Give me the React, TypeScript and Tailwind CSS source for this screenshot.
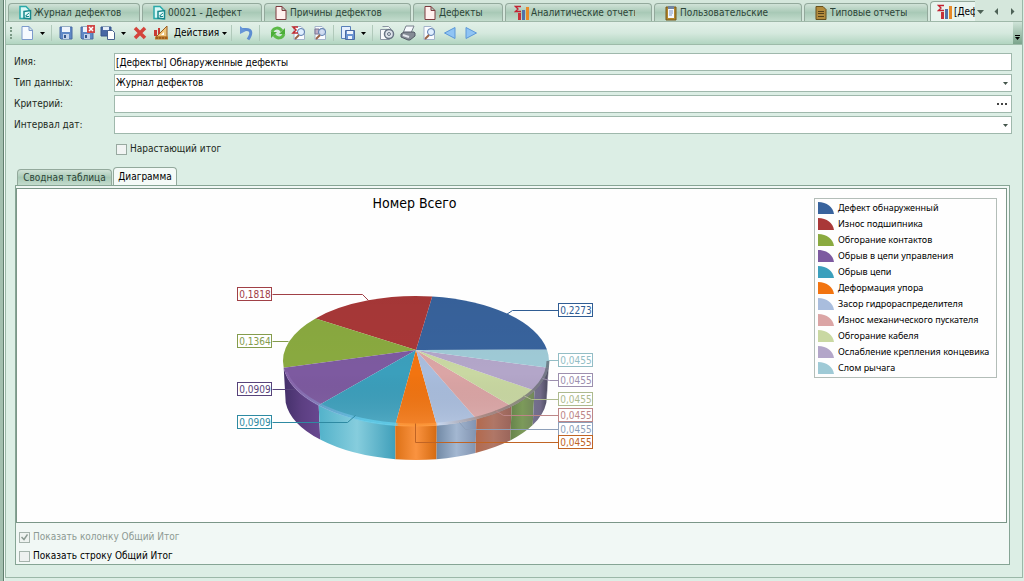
import React, { useState } from 'react';

interface Slice {
  name: string;
  from: number;
  to: number;
  color: string;
  wall?: string;
}

const slices: Slice[] = [
  { name: 'Дефект обнаруженный', from: -10, to: -83, color: '#38639d' },
  { name: 'Износ подшипника', from: -83, to: -139, color: '#a93838' },
  { name: 'Обгорание контактов', from: -139, to: -186, color: '#8aaa40' },
  { name: 'Обрыв в цепи управления', from: -186, to: -223, color: '#7d5aa0', wall: 'purple' },
  { name: 'Обрыв цепи', from: -223, to: -261, color: '#3b9fbc', wall: 'teal' },
  { name: 'Деформация упора', from: -261, to: -279, color: '#f27410', wall: 'orange' },
  { name: 'Засор гидрораспределителя', from: -279, to: -297, color: '#a9bddd', wall: 'blue' },
  { name: 'Износ механического пускателя', from: -297, to: -316, color: '#dba5a5', wall: 'pink' },
  { name: 'Обгорание кабеля', from: -316, to: -333, color: '#c9d8a2', wall: 'green' },
  { name: 'Ослабление крепления концевика', from: -333, to: -354, color: '#b3a6c9', wall: 'lilac' },
  { name: 'Слом рычага', from: -354, to: -370, color: '#9fcad6', wall: 'lilac' },
];

const walls = [
  { id: 'purple', stops: ['#44306a', '#5c3f82', '#684890'] },
  { id: 'teal', stops: ['#52b2ca', '#86cddd', '#3f9fba'] },
  { id: 'orange', stops: ['#dd7116', '#fa9340', '#d56a10'] },
  { id: 'blue', stops: ['#7189a5', '#a3b7d1', '#8193b0'] },
  { id: 'pink', stops: ['#b3694c', '#b07767', '#99645a'] },
  { id: 'green', stops: ['#66844b', '#7c9a5a', '#72875a'] },
  { id: 'lilac', stops: ['#74718f', '#716a88', '#4b4a5e'] },
];

const callouts = [
  { text: '0,2273', x: 321, y: 27, color: '#2f5c93', line: '269,38 275,34 321,34' },
  { text: '0,1818', x: 0, y: 11, color: '#a04046', line: '35,18 125,18 131,24' },
  { text: '0,1364', x: 0, y: 58, color: '#849c4c', line: '35,65 51,65' },
  { text: '0,0909', x: 0, y: 106, color: '#57437a', line: '35,113 58,113' },
  { text: '0,0909', x: 0, y: 139, color: '#2e8aa2', line: '35,146 110,146 118,139' },
  { text: '0,0455', x: 321, y: 77, color: '#93bdc5', line: '310,84 321,84' },
  { text: '0,0455', x: 321, y: 97, color: '#9c8fae', line: '305,102 312,104 321,104' },
  { text: '0,0455', x: 321, y: 116, color: '#adba8e', line: '286,119 294,123 321,123' },
  { text: '0,0455', x: 321, y: 132, color: '#bd8687', line: '258,134 266,139 321,139' },
  { text: '0,0455', x: 321, y: 146, color: '#8d9fb9', line: '222,146 228,153 321,153' },
  { text: '0,0455', x: 321, y: 159, color: '#c06424', line: '178,147 178,166 321,166' },
];

const point = (deg: number, cy: number, rx: number, ry: number) => {
  const a = (deg * Math.PI) / 180;
  return `${(179 + rx * Math.cos(a)).toFixed(1)} ${(cy + ry * Math.sin(a)).toFixed(1)}`;
};

const topPath = (s: Slice) =>
  `M179 74L${point(s.from, 85, 133, 65)}A133 65 0 0 0 ${point(s.to, 85, 133, 65)}Z`;

const wallPath = (s: Slice) => {
  const from = Math.min(s.from, -180);
  const to = Math.max(s.to, -360);
  return `M${point(from, 85, 133, 65)}A133 65 0 0 0 ${point(to, 85, 133, 65)}L${point(to, 120, 131, 64)}A131 64 0 0 1 ${point(from, 120, 131, 64)}Z`;
};

const PieChart = () => (
  <svg width="356" height="190" viewBox="0 0 356 190" className="shrink-0" role="img" aria-label="Номер Всего">
    <defs>
      {walls.map((w) => (
        <linearGradient key={w.id} id={w.id}>
          {w.stops.map((c, i) => (
            <stop key={c} offset={i / 2} stopColor={c} />
          ))}
        </linearGradient>
      ))}
      <linearGradient id="shade" x1="0" y1="0" x2="0" y2="1">
        <stop offset="0" stopColor="#000" stopOpacity="0.03" />
        <stop offset="0.6" stopColor="#000" stopOpacity="0" />
        <stop offset="1" stopColor="#fff" stopOpacity="0.12" />
      </linearGradient>
      <linearGradient id="rim">
        <stop offset="0" stopColor="#a884cc" stopOpacity="0.3" />
        <stop offset="0.3" stopColor="#63d0ee" />
        <stop offset="0.42" stopColor="#63d0ee" />
        <stop offset="0.43" stopColor="#ff9a3c" />
        <stop offset="0.57" stopColor="#ff9a3c" />
        <stop offset="0.58" stopColor="#cbdcf4" />
        <stop offset="0.75" stopColor="#9a8078" />
        <stop offset="1" stopColor="#5c6670" />
      </linearGradient>
    </defs>
    {slices.filter((s) => s.wall).map((s) => (
      <path key={s.name} d={wallPath(s)} fill={`url(#${s.wall})`} />
    ))}
    {slices.map((s) => (
      <path key={s.name} d={topPath(s)} fill={s.color} />
    ))}
    <ellipse cx="179" cy="85" rx="133" ry="65" fill="url(#shade)" />
    <path d={`M${point(170, 85, 132, 64)}A132 64 0 0 0 ${point(0, 85, 132, 64)}`} fill="none" stroke="url(#rim)" strokeWidth="3" strokeOpacity="0.75" />
    {callouts.map((c) => (
      <g key={`${c.x}-${c.y}`} fontFamily="'DejaVu Sans Condensed', 'DejaVu Sans', sans-serif" fontSize="10">
        <polyline points={c.line} transform="translate(0.5 0.5)" fill="none" stroke={c.color} />
        <rect x={c.x + 0.5} y={c.y + 0.5} width="34" height="13" fill="#fff" stroke={c.color} />
        <text x={c.x + 18} y={c.y + 11} textAnchor="middle" fill={c.color}>{c.text}</text>
      </g>
    ))}
  </svg>
);

const Icon = ({ name }: { name: string }) => {
  const floppy = (
    <>
      <path d="M2 2h12v12H3l-1-1z" fill="#5f88c6" stroke="#4a6aa2" />
      <path d="M4 2h8v5H4z" fill="#eef4fc" />
      <path d="M5 9h6v5H5z" fill="#c3d3ea" />
      <path d="M6 10h2v3H6z" fill="#36558c" />
    </>
  );
  const page = <path d="M3 1.5h7l3.500 3.500v9.500H3z" fill="#fafcff" stroke="#a3b2ca" />;
  const lens = (
    <>
      <circle cx="10" cy="7" r="3.500" fill="#d8eaff" fillOpacity="0.8" stroke="#5a7cae" />
      <path d="M8 10l-4 4" stroke="#9a6448" strokeWidth="2" />
    </>
  );
  return (
    <svg width="16" height="16" viewBox="0 0 16 16" fill="none" className="shrink-0" aria-hidden="true">
      {name === 'journal' && (
        <>
          <path d="M3 1.500h6l3 3v9H3z" fill="#d8f8f6" stroke="#2aa9a9" strokeWidth="1.500" />
          <path d="M7 6.500l6.500-1v8.500L7 13z" fill="#e4fbfa" stroke="#16888c" strokeWidth="1.500" />
          <path d="M9 10.500l3-2.500M9 10v1.500h3" stroke="#16888c" />
        </>
      )}
      {name === 'page' && <path d="M3 1.500h6l4 4v9H3z M9 1.500v4h4" fill="#fff1ef" stroke="#7c3a3e" />}
      {name === 'bars' && (
        <>
          <path d="M7 1.500H1.500L4 4 1.500 6.500H7" stroke="#c32232" strokeWidth="1.300" />
          <path d="M4 8h3v7H4z" fill="#c6323a" />
          <path d="M8 5h3v10H8z" fill="#5270a8" />
          <path d="M12 2h3v13h-3z" fill="#e88a28" />
        </>
      )}
      {name === 'clip' && (
        <>
          <path d="M3 2h10v13H3z" fill="#b4872c" stroke="#73581c" />
          <path d="M5 3h6v10H5z" fill="#f4f8ff" />
          <path d="M5 1h6v3H5z" fill="#7286a2" />
          <path d="M6 6h4M6 8h4M6 10h3" stroke="#7c96c4" />
        </>
      )}
      {name === 'report' && (
        <>
          <path d="M3 1.500h7l3 3v10H3z" fill="#b28b3c" stroke="#66501e" />
          <path d="M5 6.500h6M5 8.500h6M5 11.500h6" stroke="#54411a" />
        </>
      )}
      {name === 'new' && <path d="M3 1.500h7l3.500 3.500v9.500H3z M10 1.500v4h3.500" fill="#f6faff" stroke="#7c9acc" />}
      {name === 'save' && floppy}
      {name === 'saveClose' && (
        <>
          {floppy}
          <path d="M8 0h8v8H8z" fill="#d04848" />
          <path d="M10 2l4 4M14 2l-4 4" stroke="#fff" strokeWidth="1.500" />
        </>
      )}
      {name === 'saveNew' && (
        <>
          <path d="M1 2h10v9H1z" fill="#4868a4" stroke="#36558c" />
          <path d="M3 2h6v3H3z" fill="#e4edf9" />
          <path d="M7.500 5.500h5l2 2v7h-7z" fill="#fff" stroke="#46618e" />
        </>
      )}
      {name === 'delete' && <path d="M3 3l10 10M13 3L3 13" stroke="#d4443c" strokeWidth="3.500" />}
      {name === 'design' && (
        <>
          <path d="M1 5h3v6H1zM5 3h2v8H5z" fill="#c83a34" />
          <path d="M14 1v11H3z" fill="#efc57a" stroke="#9a5c20" />
          <path d="M11 7v3H8z" fill="#fff" />
          <path d="M2 13h13" stroke="#c07a28" strokeWidth="3" />
          <path d="M4 12v2M7 12v2M10 12v2M13 12v2" stroke="#7a4514" />
        </>
      )}
      {name === 'undo' && (
        <>
          <path d="M4 4.500h4c6 0 6 4 2 10" stroke="#5d8dd2" strokeWidth="3" />
          <path d="M2 1v8l6-3z" fill="#6796d8" />
        </>
      )}
      {name === 'refresh' && (
        <>
          <path d="M2 7C4 2 9 2 12 6M14 9C12 14 7 14 4 10" stroke="#5cba48" strokeWidth="3" />
          <path d="M15 3v6H9zM1 13V7h6z" fill="#4cae38" />
        </>
      )}
      {name === 'sum' && (
        <>
          {page}
          {lens}
          <path d="M7 2H2l3 3-3 3h5" stroke="#c02a30" strokeWidth="1.500" />
        </>
      )}
      {name === 'columns' && (
        <>
          {page}
          <path d="M3 4h4v5H3zM8 4h4v5H8z" fill="#bdaec4" stroke="#7c7694" />
          {lens}
        </>
      )}
      {name === 'copySave' && (
        <>
          <path d="M1.500 1.500h9v12h-9z" fill="#e4effe" stroke="#587fb9" />
          <path d="M5.500 5.500h9v9h-9z" fill="#6a94d2" stroke="#4a6aa2" />
          <path d="M7 6h6v3H7zM8 11h4v3H8z" fill="#eef4fc" />
        </>
      )}
      {name === 'setup' && (
        <>
          <path d="M1.500 4.500h9v10h-9z M3.500 1.500h6l3 3" fill="#f8fafc" stroke="#8a94a2" />
          <circle cx="10" cy="9" r="4.500" fill="#dfe4ec" stroke="#687484" strokeWidth="1.500" />
          <circle cx="10" cy="9" r="1.500" stroke="#687484" />
        </>
      )}
      {name === 'print' && (
        <>
          <path d="M6 1h8l-3 7H3z" fill="#f8faff" stroke="#78808c" />
          <path d="M1 9l3-2h10l1 1v3l-5 4H8l-7-3z" fill="#848b95" stroke="#535b66" />
          <path d="M3 10l6 2" stroke="#e4e8ee" strokeWidth="2" />
        </>
      )}
      {name === 'preview' && (
        <>
          {page}
          {lens}
        </>
      )}
      {name === 'prev' && <path d="M13 2.500v11L2.500 8z" fill="#8fc4f4" stroke="#5c98d8" />}
      {name === 'next' && <path d="M3 2.500v11L13.500 8z" fill="#8fc4f4" stroke="#5c98d8" />}
    </svg>
  );
};

const Caret = ({ className = '' }: { className?: string }) => (
  <svg width="5" height="3" viewBox="0 0 5 3" className={`shrink-0 ${className}`} aria-hidden="true">
    <path d="M0 0h5L2.500 3z" fill="currentColor" />
  </svg>
);

const TabArrow = ({ d }: { d: string }) => (
  <svg width="7" height="7" viewBox="0 0 7 7" aria-hidden="true">
    <path d={d} fill="currentColor" />
  </svg>
);

const tabs = [
  { title: 'Журнал дефектов', icon: 'journal', width: 'w-[132px]' },
  { title: '00021 - Дефект', icon: 'journal', width: 'w-[120px]' },
  { title: 'Причины дефектов', icon: 'page', width: 'w-[147px]' },
  { title: 'Дефекты', icon: 'page', width: 'w-[90px]' },
  { title: 'Аналитические отчеты', icon: 'bars', width: 'w-[147px]' },
  { title: 'Пользовательские', icon: 'clip', width: 'w-[148px]' },
  { title: 'Типовые отчеты', icon: 'report', width: 'w-[124px]' },
];

const inactiveTab = 'border border-[#93a99c] bg-linear-to-b from-[#d0e2d7] via-[#a8c9b6] to-[#c3dccd] text-[#2c4437]';

const ToolButton = ({ icon, title }: { icon: string; title: string }) => (
  <button type="button" title={title} className="flex h-5 w-[21px] shrink-0 items-center justify-center">
    <Icon name={icon} />
  </button>
);

const MenuButton = ({ title }: { title: string }) => (
  <button type="button" title={title} className="flex h-5 w-[11px] shrink-0 items-center justify-center text-black">
    <Caret />
  </button>
);

const Separator = () => <span className="mx-[3px] h-4 w-px shrink-0 bg-[#b0c9ba]" />;

const Toolbar = () => (
  <div className="flex h-[23px] items-stretch border-b border-[#9dbba9] bg-linear-to-b from-[#e2f0e8] via-[#d5e9de] to-[#b2d5c1]">
    <div className="flex grow items-center pl-1">
      <span className="mr-1 h-3 w-[2px] border-l-2 border-dotted border-[#7b9a87]" />
      <ToolButton icon="new" title="Создать" />
      <MenuButton title="Создать..." />
      <Separator />
      <div className="flex">
        <ToolButton icon="save" title="Сохранить" />
        <ToolButton icon="saveClose" title="Сохранить и закрыть" />
        <ToolButton icon="saveNew" title="Сохранить и создать" />
        <MenuButton title="Сохранить..." />
        <ToolButton icon="delete" title="Удалить" />
        <ToolButton icon="design" title="Конструктор" />
      </div>
      <button type="button" className="mr-px ml-[3px] flex items-center gap-[3px] text-black">
        Действия
        <Caret />
      </button>
      <Separator />
      <ToolButton icon="undo" title="Отменить" />
      <Separator />
      <div className="ml-1 flex">
        <ToolButton icon="refresh" title="Обновить" />
        <ToolButton icon="sum" title="Итоги" />
        <ToolButton icon="columns" title="Колонки" />
      </div>
      <Separator />
      <ToolButton icon="copySave" title="Экспорт" />
      <MenuButton title="Экспорт..." />
      <Separator />
      <ToolButton icon="setup" title="Параметры страницы" />
      <ToolButton icon="print" title="Печать" />
      <ToolButton icon="preview" title="Просмотр" />
      <ToolButton icon="prev" title="Назад" />
      <ToolButton icon="next" title="Вперед" />
    </div>
    <button type="button" title="Настройка панели" className="flex w-[9px] flex-col items-center justify-end gap-px bg-linear-to-b from-[#cfe4d8] to-[#7ba48c] pb-1 text-black">
      <span className="h-px w-[5px] bg-black" />
      <Caret />
    </button>
  </div>
);

const fieldBox = 'h-[18px] w-full appearance-none rounded-none border border-[#9fb8ac] bg-white px-px text-black outline-none';

const App: React.FC = () => {
  const [name, setName] = useState('[Дефекты] Обнаруженные дефекты');
  const [criteria, setCriteria] = useState('');
  const [running, setRunning] = useState(false);
  const [showRow, setShowRow] = useState(false);

  return (
    <div className="flex min-h-screen bg-[#dceee5] font-['DejaVu_Sans_Condensed','DejaVu_Sans',sans-serif] text-[10px] leading-3 text-[#1c2a22]">
      <div className="w-1 shrink-0 border-r border-[#5f7d6d] bg-[#a3bfaf]" />
      <div className="flex min-w-0 grow flex-col border-l border-[#f0f8f4] pr-px pb-[3px]">
        <div className="flex min-w-0 grow flex-col border-r border-b border-l border-[#9bb8a8]">
          <div className="flex h-[22px] min-w-0 items-end gap-[2px] border-b border-[#9fb8a9] bg-[#d5e7dc] pl-[2px]">
            {tabs.map((t) => (
              <button
                key={t.title}
                type="button"
                className={`flex h-[18px] shrink-0 items-center gap-px overflow-hidden rounded-t-sm border-b-0 pr-4 pl-2 whitespace-nowrap ${t.width} ${inactiveTab}`}
              >
                <Icon name={t.icon} />
                <span className="overflow-hidden">{t.title}</span>
              </button>
            ))}
            <button type="button" className="flex h-5 w-[45px] shrink-0 items-center gap-px overflow-hidden rounded-tl-sm border-t border-l border-[#93a99c] bg-[#e8f4ee] pl-[6px] whitespace-nowrap text-black">
              <Icon name="bars" />
              <span className="overflow-hidden">[Дефекты]</span>
            </button>
            <div className="flex h-5 grow items-center justify-between pr-[6px] text-[#4e6257]">
              <button type="button" title="Список вкладок"><TabArrow d="M0 2h7L3.500 6z" /></button>
              <button type="button" title="Влево"><TabArrow d="M5 0v7L1.500 3.500z" /></button>
              <button type="button" title="Вправо"><TabArrow d="M2 0v7l3.500-3.500z" /></button>
            </div>
          </div>

          <Toolbar />

          <form className="flex grow flex-col px-2 pt-2 pb-3">
            <div className="grid grid-cols-[100px_1fr] items-center gap-y-[3px] pr-[2px]">
              <label htmlFor="name">Имя:</label>
              <input id="name" value={name} onChange={(e) => setName(e.target.value)} className={fieldBox} />

              <label htmlFor="type">Тип данных:</label>
              <div className="relative flex">
                <select id="type" className={fieldBox}>
                  <option>Журнал дефектов</option>
                </select>
                <Caret className="pointer-events-none absolute top-2 right-1 text-[#44554b]" />
              </div>

              <label htmlFor="criteria">Критерий:</label>
              <div className={`flex ${fieldBox}`}>
                <input id="criteria" value={criteria} onChange={(e) => setCriteria(e.target.value)} className="min-w-0 grow outline-none" />
                <button type="button" title="Выбрать" className="flex w-4 items-center justify-center gap-[2px]">
                  <span className="size-[2px] bg-[#444]" />
                  <span className="size-[2px] bg-[#444]" />
                  <span className="size-[2px] bg-[#444]" />
                </button>
              </div>

              <label htmlFor="period">Интервал дат:</label>
              <div className="relative flex">
                <select id="period" className={fieldBox}>
                  <option></option>
                </select>
                <Caret className="pointer-events-none absolute top-2 right-1 text-[#44554b]" />
              </div>
            </div>

            <label className="mt-[9px] ml-[102px] flex h-3 items-center gap-[3px] self-start">
              <input type="checkbox" checked={running} onChange={(e) => setRunning(e.target.checked)} className="size-[11px] appearance-none border border-[#98a9a0] bg-[#f1f4f3]" />
              Нарастающий итог
            </label>

            <div className="mt-3 flex items-end gap-px pl-[3px]">
              <button type="button" className={`h-4 w-[95px] rounded-t-sm border-b-0 ${inactiveTab}`}>Сводная таблица</button>
              <button type="button" className="-mb-px h-[19px] w-[64px] rounded-t-sm border border-b-0 border-[#93a99c] bg-[#f4faf7] text-black">Диаграмма</button>
            </div>

            <div className="mr-1 ml-px flex grow flex-col border border-[#86a595] bg-[#f1f8f5]">
              <div className="mt-[2px] mr-[2px] flex min-h-[335px] items-start border border-[#7b9688] bg-[#fefefe] pr-[9px]">
                <div className="flex grow flex-col items-center pr-[2px]">
                  <h2 className="mt-[5px] text-[14px] leading-[18px] text-black">Номер Всего</h2>
                  <div className="mt-[64px] flex">
                    <PieChart />
                  </div>
                </div>
                <ul className="mt-[9px] w-[183px] shrink-0 border border-[#b3bdb8] px-[3px] py-px font-['Noto_Sans','DejaVu_Sans',sans-serif] text-[9px] text-black">
                  {slices.map((s) => (
                    <li key={s.name} className="flex h-4 items-center gap-1 whitespace-nowrap">
                      <svg width="16" height="12" viewBox="0 0 16 12" className="shrink-0" aria-hidden="true">
                        <path d="M0 0C9 0 15 5 16 12H0z" fill={s.color} />
                      </svg>
                      {s.name}
                    </li>
                  ))}
                </ul>
              </div>

              <div className="flex flex-col items-start gap-[7px] px-[3px] pt-2">
                <label className="flex h-3 items-center gap-[3px] text-[#8d9a93]">
                  <span className="relative flex">
                    <input type="checkbox" checked disabled readOnly className="size-[11px] appearance-none border border-[#a5b3ac] bg-[#eef3f0]" />
                    <svg width="7" height="7" viewBox="0 0 7 7" className="pointer-events-none absolute top-[2px] left-[2px]" aria-hidden="true">
                      <path d="M0.500 3L3 5.500 6.500 0.500" fill="none" stroke="#8b9a92" strokeWidth="1.500" />
                    </svg>
                  </span>
                  Показать колонку Общий Итог
                </label>
                <label className="flex h-3 items-center gap-[3px] text-black">
                  <input type="checkbox" checked={showRow} onChange={(e) => setShowRow(e.target.checked)} className="size-[11px] appearance-none border border-[#a5b3ac] bg-[#eef1f0]" />
                  Показать строку Общий Итог
                </label>
              </div>
            </div>
          </form>
        </div>
      </div>
    </div>
  );
};

export default App;
